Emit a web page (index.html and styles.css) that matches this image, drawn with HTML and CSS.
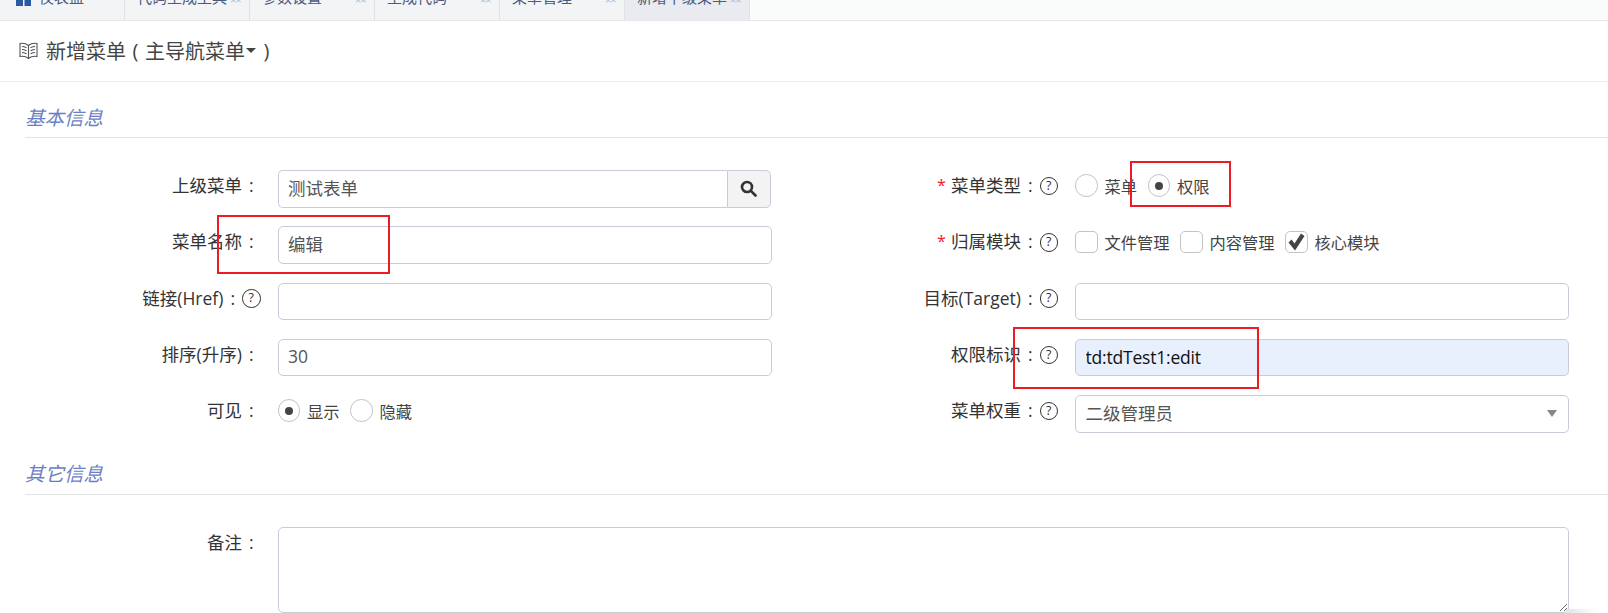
FILE: index.html
```html
<!DOCTYPE html>
<html lang="zh-CN">
<head>
<meta charset="utf-8">
<title>新增菜单</title>
<link rel="stylesheet" href="styles.css">
</head>
<body>
<nav class="tabs">
  <a class="tab tab-home"><svg class="home" width="15" height="6" viewBox="0 0 15 6"><rect width="7" height="6"/><rect x="8.500" width="6.500" height="6"/></svg>仪表盘</a>
  <a class="tab">代码生成工具<i class="x">××</i></a>
  <a class="tab">参数设置<i class="x">××</i></a>
  <a class="tab">生成代码<i class="x">××</i></a>
  <a class="tab">菜单管理<i class="x">××</i></a>
  <a class="tab active">新增下级菜单<i class="x">××</i></a>
</nav>
<header class="title">
  <svg class="book" width="19" height="19" viewBox="0 0 19 19" fill="none" stroke="#555" stroke-width="1.100"><path d="M9.500 4.500C7.500 2.800 4 2 1 2.500V15.500C4 15 7.500 15.800 9.500 17.500C11.500 15.800 15 15 18 15.500V2.500C15 2 11.500 2.800 9.500 4.500ZM9.500 4.500V17.500"/><path d="M3 5.500C4.500 5.500 6 6 7.500 6.700M3 8.500C4.500 8.500 6 9 7.500 9.700M3 11.500C4.500 11.500 6 12 7.500 12.700M16 5.500C14.500 5.500 13 6 11.500 6.700M16 8.500C14.500 8.500 13 9 11.500 9.700M16 11.500C14.500 11.500 13 12 11.500 12.700"/></svg>
  <span>新增菜单</span><span class="paren">(</span><span>主导航菜单</span><i class="caret"></i><span class="paren end">)</span>
</header>
<main>
  <h2 class="legend">基本信息</h2>
  <form class="grid">
    <div class="lab">上级菜单<b class="colon">:</b></div>
    <div class="group"><input class="ctl joined" value="测试表单"><button type="button" class="search"><svg width="17" height="17" viewBox="0 0 17 17" fill="none" stroke="#333" stroke-width="2.600"><circle cx="7" cy="7" r="5"/><path d="M10.700 10.700L15.500 15.500" stroke-linecap="round"/></svg></button></div>
    <div class="lab"><em>*</em>菜单类型<b class="colon">:</b><i class="help">?</i></div>
    <div class="opts"><label class="opt"><span class="radio"></span>菜单</label><label class="opt"><span class="radio on"></span>权限</label></div>

    <div class="lab">菜单名称<b class="colon">:</b></div>
    <input class="ctl" value="编辑">
    <div class="lab"><em>*</em>归属模块<b class="colon">:</b><i class="help">?</i></div>
    <div class="opts"><label class="opt"><span class="check"></span>文件管理</label><label class="opt"><span class="check"></span>内容管理</label><label class="opt"><span class="check"><svg width="20" height="20" viewBox="0 0 20 20"><path d="M2.500 10.500L5.500 7.500L8.500 11.500L15 1.500L18.500 4L9 18.500Z" fill="#444"/></svg></span>核心模块</label></div>

    <div class="lab">链接(Href)<b class="colon">:</b><i class="help">?</i></div>
    <input class="ctl">
    <div class="lab">目标(Target)<b class="colon">:</b><i class="help">?</i></div>
    <input class="ctl">

    <div class="lab">排序(升序)<b class="colon">:</b></div>
    <input class="ctl" value="30">
    <div class="lab">权限标识<b class="colon">:</b><i class="help">?</i></div>
    <input class="ctl filled" value="td:tdTest1:edit">

    <div class="lab">可见<b class="colon">:</b></div>
    <div class="opts"><label class="opt"><span class="radio on"></span>显示</label><label class="opt"><span class="radio"></span>隐藏</label></div>
    <div class="lab">菜单权重<b class="colon">:</b><i class="help">?</i></div>
    <div class="ctl select">二级管理员<i class="arrow"></i></div>
  </form>
  <h2 class="legend second">其它信息</h2>
  <form class="notes">
    <div class="lab">备注<b class="colon">:</b></div>
    <textarea class="area"></textarea>
  </form>
</main>
<div class="mark mark-name"></div>
<div class="mark mark-type"></div>
<div class="mark mark-perm"></div>
<div class="shade"></div>
</body>
</html>
```
FILE: styles.css
```css
* { box-sizing: border-box; }
html, body { margin: 0; height: 613px; overflow: hidden; background: #fff; }
body {
  position: relative;
  font-family: "Open Sans", "Noto Sans CJK SC", sans-serif;
  font-size: 17.5px;
  color: #333;
}
.tabs {
  height: 21px;
  display: flex;
  align-items: flex-end;
  overflow: hidden;
  background: #fafbfb;
  border-bottom: 1.5px solid #e7e7e9;
}
.tab {
  position: relative;
  flex: none;
  width: 125px;
  height: 46px;
  line-height: 46px;
  padding-left: 12.500px;
  font-size: 15px;
  color: #4a5a80;
  background: #f3f4f6;
  border-right: 1.5px solid #dfe1e4;
  white-space: nowrap;
}
.tab-home { width: 124.5px; padding-left: 39px; }
.tab.active { background: #e9ebf0; }
.home { position: absolute; left: 16px; bottom: 14px; fill: #2a5aa0; }
.x {
  position: absolute;
  right: 8px;
  top: 21px;
  font-style: normal;
  font-size: 11px;
  line-height: 10px;
  letter-spacing: -1px;
  color: #a8bfdc;
}
.title {
  height: 60.500px;
  display: flex;
  align-items: center;
  padding-left: 19px;
  font-size: 20px;
  color: #444;
  border-bottom: 1px solid #eee;
}
.book { margin-right: 8px; }
.paren { margin-left: 6.500px; margin-right: 6.500px; font-size: 20px; }
.paren.end { margin-right: 0; margin-left: 7px; }
.caret {
  width: 0;
  height: 0;
  margin-left: 1.500px;
  border: 5px solid transparent;
  border-top: 5.500px solid #444;
  border-bottom: 0;
}
.legend {
  margin: 23px 0 0 25px;
  padding-bottom: 7px;
  line-height: 25px;
  font-size: 19.500px;
  font-weight: 400;
  font-style: italic;
  color: #6b80c4;
  border-bottom: 1.500px solid #e2e3e5;
}
.legend.second { margin-top: 28.500px; padding-bottom: 8px; }
.grid {
  display: grid;
  grid-template-columns: 277.500px 494px 303.500px 494px;
  grid-auto-rows: 37.500px;
  row-gap: 18.750px;
  padding-top: 32.500px;
}
.lab {
  display: flex;
  justify-content: flex-end;
  align-items: center;
  height: 30px;
  padding-right: 17px;
  white-space: nowrap;
  line-height: 30px;
}
.lab em { font-style: normal; color: #e22; margin-right: 5px; font-size: 16px; }
.colon { font-weight: 400; margin: 0 7px 0 7px; }
.help {
  flex: none;
  width: 18.500px;
  height: 18.500px;
  margin: 2px 0 0 0;
  border: 1.300px solid #333;
  border-radius: 50%;
  font-style: normal;
  font-size: 12.500px;
  line-height: 16px;
  text-align: center;
}
.ctl {
  width: 100%;
  height: 37.500px;
  padding: 0 9.500px 3px;
  font: inherit;
  color: #555;
  background: #fff;
  border: 1.300px solid #c8ccd8;
  border-radius: 5px;
  outline: 0;
}
.group { display: flex; width: 493px; }
.ctl.joined { flex: 1; min-width: 0; border-radius: 5px 0 0 5px; border-right: 0; }
.search {
  flex: none;
  width: 44px;
  height: 37.500px;
  padding: 0;
  display: flex;
  align-items: center;
  justify-content: center;
  background: #f3f3f4;
  border: 1.300px solid #c8ccd8;
  border-radius: 0 5px 5px 0;
}
.ctl.filled { padding-bottom: 1px; color: #111; background: #e8f0fe; letter-spacing: -0.200px; }
.select { display: flex; align-items: center; justify-content: space-between; padding-right: 11px; }
.arrow {
  width: 0;
  height: 0;
  margin-top: 3px;
  border: 5px solid transparent;
  border-top: 7px solid #888;
  border-bottom: 0;
}
.opts { display: flex; align-items: flex-start; gap: 10.500px; padding-top: 4.500px; }
.opt { display: flex; align-items: center; height: 22px; font-size: 16.250px; color: #444; white-space: nowrap; }
.radio, .check {
  flex: none;
  width: 22.500px;
  height: 22.500px;
  margin-right: 7px;
  display: flex;
  align-items: center;
  justify-content: center;
  border: 1.500px solid #c4c4c4;
  background: #fff;
}
.radio { border-radius: 50%; }
.radio.on::after { content: ""; width: 8px; height: 8px; border-radius: 50%; background: #444; }
.check { border-radius: 5px; }
.notes {
  display: grid;
  grid-template-columns: 277.500px 1291px;
  padding-top: 31.500px;
}
.area {
  display: block;
  width: 100%;
  height: 86px;
  margin: 0;
  padding: 8px 10px;
  font: inherit;
  border: 1.300px solid #c8ccd8;
  border-radius: 5px;
  outline: 0;
}
.mark { position: absolute; border: 2px solid #ed1c24; pointer-events: none; }
.mark-name { left: 217px; top: 215px; width: 173px; height: 59px; }
.mark-type { left: 1130px; top: 161px; width: 101px; height: 46px; }
.mark-perm { left: 1013px; top: 327px; width: 246px; height: 62px; }
.shade {
  position: absolute;
  left: 1566px;
  top: 609px;
  width: 30px;
  height: 4px;
  background: linear-gradient(to right, #e4e4e4, #fff);
}
```
